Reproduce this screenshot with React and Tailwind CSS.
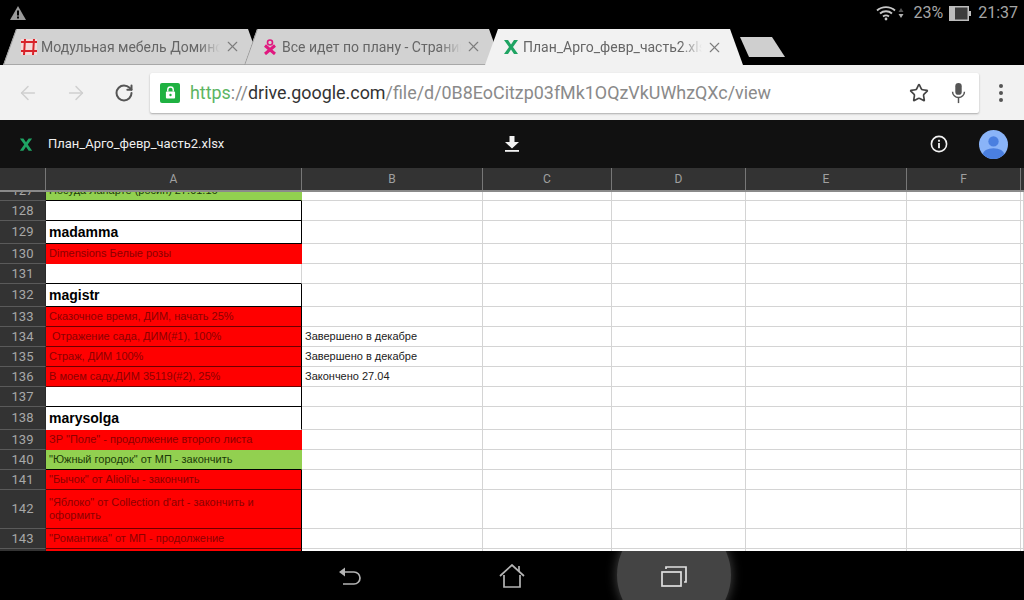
import { ArrowLeft, ArrowRight, RotateCw, Star, X } from "lucide-react";

const GRID = "border-b border-r border-[#d4d4d4]";

const redEdge = "bg-[#ff0000] text-[#8c0000] border-b-[#6e0000] border-r-black";
const whiteEdge = "bg-white text-black border-b-black border-r-black";

const rows = [
  { n: 127, h: "h-[20px]", a: "bg-[#92d050] text-[#1b3a08] border-b-black border-r-[#92d050]", text: "Посуда Лапарте (росип) 27.01.16" },
  { n: 128, h: "h-[20px]", a: whiteEdge },
  { n: 129, h: "h-[23px]", a: whiteEdge, text: "madamma", bold: true },
  { n: 130, h: "h-[20px]", a: "bg-[#ff0000] text-[#8c0000] border-b-[#ff0000] border-r-[#ff0000]", text: "Dimensions Белые розы" },
  { n: 131, h: "h-[20px]", a: "bg-white border-b-black border-r-[#d4d4d4]" },
  { n: 132, h: "h-[23px]", a: whiteEdge, text: "magistr", bold: true },
  { n: 133, h: "h-[20px]", a: redEdge, text: "Сказочное время, ДИМ, начать 25%" },
  { n: 134, h: "h-[20px]", a: redEdge, text: "\u00a0Отражение сада, ДИМ(#1), 100%", b: "Завершено в декабре" },
  { n: 135, h: "h-[20px]", a: redEdge, text: "Страж, ДИМ 100%", b: "Завершено в декабре" },
  { n: 136, h: "h-[20px]", a: redEdge, text: "В моем саду,ДИМ 35119(#2), 25%", b: "Закончено 27.04" },
  { n: 137, h: "h-[20px]", a: whiteEdge },
  { n: 138, h: "h-[23px]", a: "bg-white text-black border-b-white border-r-black", text: "marysolga", bold: true },
  { n: 139, h: "h-[20px]", a: "bg-[#ff0000] text-[#8c0000] border-b-[#ff0000] border-r-[#ff0000]", text: "ЗР \"Поле\" - продолжение второго листа" },
  { n: 140, h: "h-[20px]", a: "bg-[#92d050] text-[#1b3a08] border-b-black border-r-[#92d050]", text: "\"Южный городок\" от МП - закончить" },
  { n: 141, h: "h-[20px]", a: redEdge, text: "\"Бычок\" от Alioli'ы - закончить" },
  { n: 142, h: "h-[39px]", a: redEdge, text: "\"Яблоко\" от Collection d'art - закончить и оформить" },
  { n: 143, h: "h-[20px]", a: redEdge, text: "\"Романтика\" от МП - продолжение" },
  { n: 144, h: "h-[20px]", a: redEdge },
];

function SheetsLogo({ className }) {
  return (
    <svg viewBox="0 0 16 16" className={className}>
      <path d="M1 1h4l3 4.5L11 1h4l-5 7 5 7h-4l-3-4.5L5 15H1l5-7z" fill="#1fa463" />
    </svg>
  );
}

function ModularIcon() {
  return (
    <svg viewBox="0 0 16 16" className="h-[16px] w-[16px] shrink-0">
      <rect width="16" height="16" fill="#f4d8d8" />
      <path d="M4 0 3 16M13 0l-1 16M0 3h16M0 12h16" stroke="#d8232a" strokeWidth="2" fill="none" />
    </svg>
  );
}

function FigureIcon() {
  return (
    <svg viewBox="0 0 16 16" className="h-[16px] w-[16px] shrink-0">
      <circle cx="8" cy="3.5" r="2.5" fill="none" stroke="#e0187f" strokeWidth="1.6" />
      <path d="M3 6.5 13 15M13 6.5 3 15" stroke="#e0187f" strokeWidth="3" />
    </svg>
  );
}

function Tab({ title, icon, active, first }) {
  const shape = active ? "bg-[#f2f2f2] z-20" : "bg-[#d2d2d2] border-b border-[#a8a8a8] z-10";
  return (
    <div
      className={`relative flex h-[36px] w-[258px] shrink-0 items-center pl-[18px] [clip-path:polygon(0_100%,13px_0,calc(100%-13px)_0,100%_100%)] ${shape} ${first ? "ml-[3px]" : "-ml-[17px]"}`}
    >
      {!active && (
        <svg viewBox="0 0 14 36" className="absolute left-0 top-0 h-[36px] w-[14px]">
          <line x1="0.5" y1="36" x2="13.5" y2="0" stroke="#9a9a9a" strokeWidth="1" />
        </svg>
      )}
      {icon}
      <span className="ml-[4px] mt-[1px] w-[179px] overflow-hidden whitespace-nowrap text-[14px] text-[#666] [mask-image:linear-gradient(to_right,black_88%,transparent)]">
        {title}
      </span>
      <X size={17} strokeWidth={1.6} className="ml-[4px] shrink-0 text-[#7d7d7d]" />
    </div>
  );
}

function StatusBar() {
  return (
    <div className="flex h-[29px] items-center justify-between bg-black pb-[3px] pl-[10px] pr-[6px] text-[16px] text-[#a6a6a6]">
      <svg viewBox="0 0 16 14" className="h-[14px] w-[16px]">
        <path d="M8 0 16 14H0z" fill="#9a9a9a" />
        <rect x="7" y="4.5" width="2" height="5" fill="#000" />
        <rect x="7" y="10.5" width="2" height="2" fill="#000" />
      </svg>
      <div className="flex items-center">
        <svg viewBox="0 0 20 16" className="h-[16px] w-[20px]" fill="none" stroke="#c8c8c8" strokeWidth="1.9">
          <path d="M1 5.5C6 1 14 1 19 5.5" />
          <path d="M4 8.5c3.5-3 8.5-3 12 0" />
          <path d="M7 11.5c2-1.5 4-1.5 6 0" />
          <circle cx="10" cy="14" r="1.4" fill="#c8c8c8" stroke="none" />
        </svg>
        <svg viewBox="0 0 6 12" className="ml-[2px] h-[12px] w-[6px]">
          <path d="M3 1 5.5 5h-5z" fill="#555" />
          <path d="M3 11 .5 7h5z" fill="#b0b0b0" />
        </svg>
        <span className="ml-[9px]">23%</span>
        <svg viewBox="0 0 22 15" className="ml-[6px] h-[15px] w-[22px]">
          <rect width="20" height="15" fill="#bdbdbd" />
          <rect x="6" y="1.5" width="12.5" height="12" fill="#3c3c3c" />
          <rect x="20" y="5" width="2" height="5" fill="#bdbdbd" />
        </svg>
        <span className="ml-[7px]">21:37</span>
      </div>
    </div>
  );
}

function TabStrip() {
  return (
    <div className="flex h-[36px] bg-black">
      <Tab first title="Модульная мебель Домино" icon={<ModularIcon />} />
      <Tab title="Все идет по плану - Страница" icon={<FigureIcon />} />
      <Tab active title="План_Арго_февр_часть2.xlsx" icon={<SheetsLogo className="h-[16px] w-[16px] shrink-0" />} />
      <div className="z-0 -ml-[3px] mt-[8px] h-[20px] w-[45px] bg-[#cfcfcf] [clip-path:polygon(0_0,32px_0,100%_100%,9px_100%)]" />
    </div>
  );
}

function Toolbar() {
  return (
    <div className="flex h-[55px] items-center bg-[#f2f2f2] pl-[17px]">
      <ArrowLeft size={22} strokeWidth={1.6} className="text-[#cfcfcf]" />
      <ArrowRight size={22} strokeWidth={1.6} className="ml-[26px] text-[#cfcfcf]" />
      <RotateCw size={20} strokeWidth={2.4} className="ml-[27px] text-[#555]" />
      <div className="ml-[16px] flex h-[40px] w-[829px] items-center rounded-[2px] bg-white pl-[10px] shadow-[0_1px_2px_rgba(0,0,0,0.3)]">
        <div className="flex h-[20px] w-[20px] items-center justify-center rounded-[2px] bg-[#1fb141]">
          <svg viewBox="0 0 12 14" className="h-[13px] w-[11px]">
            <path d="M3 6V4a3 3 0 0 1 6 0v2" fill="none" stroke="#fff" strokeWidth="1.5" />
            <rect x="1" y="6" width="10" height="7.5" rx="1" fill="#fff" />
            <circle cx="6" cy="9.7" r="1.3" fill="#1fb141" />
          </svg>
        </div>
        <div className="ml-[10px] mt-[2px] whitespace-nowrap text-[17.9px] text-[#8a8a8a]">
          <span className="text-[#5cb562]">https</span>
          ://
          <span className="text-[#333]">drive.google.com</span>
          /file/d/0B8EoCitzp03fMk1OQzVkUWhzQXc/view
        </div>
        <Star size={20} strokeWidth={2} className="ml-[138px] shrink-0 text-[#444]" />
        <svg viewBox="0 0 16 24" className="ml-[22px] h-[22px] w-[15px] shrink-0">
          <rect x="4.5" y="1" width="7" height="13" rx="3.5" fill="#555" />
          <path d="M1.5 10.5a6.5 6.5 0 0 0 13 0" fill="none" stroke="#555" strokeWidth="1.6" />
          <rect x="7.2" y="17" width="1.6" height="6" fill="#555" />
        </svg>
      </div>
      <div className="ml-[20px] flex flex-col gap-[3px]">
        <span className="h-[4px] w-[4px] rounded-full bg-[#555]" />
        <span className="h-[4px] w-[4px] rounded-full bg-[#555]" />
        <span className="h-[4px] w-[4px] rounded-full bg-[#555]" />
      </div>
    </div>
  );
}

function DocHeader() {
  return (
    <div className="flex h-[48px] items-center bg-[#111] pl-[19px] text-white">
      <SheetsLogo className="h-[15px] w-[14px] shrink-0" />
      <span className="ml-[15px] w-[456px] text-[13px] text-[#eee]">План_Арго_февр_часть2.xlsx</span>
      <svg viewBox="0 0 16 16" className="h-[16px] w-[16px] shrink-0">
        <path d="M5.5 0h5v6H15l-7 6.5L1 6h4.5z" fill="#f2f2f2" />
        <rect x="1" y="14" width="14" height="1.8" fill="#f2f2f2" />
      </svg>
      <svg viewBox="0 0 18 18" className="ml-[410px] h-[18px] w-[18px] shrink-0">
        <circle cx="9" cy="9" r="7.6" fill="none" stroke="#f2f2f2" strokeWidth="1.6" />
        <rect x="8.1" y="8" width="1.8" height="5.2" fill="#f2f2f2" />
        <rect x="8.1" y="4.8" width="1.8" height="1.9" fill="#f2f2f2" />
      </svg>
      <svg viewBox="0 0 28 28" className="ml-[31px] h-[29px] w-[29px] shrink-0">
        <defs>
          <clipPath id="avatar-clip">
            <circle cx="14" cy="14" r="14" />
          </clipPath>
        </defs>
        <g clipPath="url(#avatar-clip)">
          <rect width="28" height="28" fill="#8ab4f8" />
          <circle cx="14" cy="11" r="5" fill="#4a7fe0" />
          <ellipse cx="14" cy="24" rx="10.5" ry="6.5" fill="#4a7fe0" />
        </g>
      </svg>
    </div>
  );
}

function ColumnHeader() {
  const columns = [
    { label: "A", w: "w-[256px]" },
    { label: "B", w: "w-[181px]" },
    { label: "C", w: "w-[129px]" },
    { label: "D", w: "w-[134px]" },
    { label: "E", w: "w-[161px]" },
    { label: "F", w: "w-[114px]" },
  ];
  return (
    <div className="flex h-[24px] border-b-2 border-[#8a8a8a] bg-[#333] text-[12px] text-[#a0a0a0]">
      <div className="w-[46px] shrink-0 border-r border-[#777]" />
      {columns.map((col) => (
        <div key={col.label} className={`${col.w} flex shrink-0 items-center justify-center border-r border-[#777]`}>
          {col.label}
        </div>
      ))}
      <div className="flex-1" />
    </div>
  );
}

function SheetRow({ row }) {
  const textClass = row.bold
    ? "font-['Liberation_Sans',sans-serif] text-[14px] font-bold"
    : "font-['Liberation_Sans',sans-serif] text-[11px] leading-[13px]";
  return (
    <div className={`flex ${row.h}`}>
      <div className="flex w-[46px] shrink-0 items-center justify-center border-b border-r border-b-[#5a5a5a] border-r-[#2a2a2a] bg-[#333] text-[13px] text-[#a8a8a8]">
        {row.n}
      </div>
      <div className={`flex w-[256px] shrink-0 items-center border-b border-r pl-[3px] pr-[40px] ${row.a} ${textClass}`}>
        {row.text}
      </div>
      <div className={`flex w-[181px] shrink-0 items-center pl-[3px] font-['Liberation_Sans',sans-serif] text-[11px] text-[#222] ${GRID}`}>
        {row.b}
      </div>
      <div className={`w-[129px] shrink-0 ${GRID}`} />
      <div className={`w-[134px] shrink-0 ${GRID}`} />
      <div className={`w-[161px] shrink-0 ${GRID}`} />
      <div className={`w-[114px] shrink-0 ${GRID}`} />
      <div className={`flex-1 ${GRID}`} />
    </div>
  );
}

function NavBar() {
  return (
    <div className="flex h-[49px] justify-center overflow-hidden bg-black">
      <div className="flex w-[162px] items-center justify-center">
        <svg viewBox="0 0 24 20" className="h-[20px] w-[24px]" fill="none" stroke="#b4b4b4" strokeWidth="1.7">
          <path d="M5 6h11a6 6 0 0 1 0 12H5" />
          <path d="M7 1.5v9L1 6z" fill="#b4b4b4" stroke="none" />
        </svg>
      </div>
      <div className="flex w-[162px] items-center justify-center">
        <svg viewBox="0 0 26 24" className="h-[24px] w-[26px]" fill="none" stroke="#b4b4b4" strokeWidth="1.7">
          <path d="M1 12 13 1l12 11" />
          <path d="M5 11v12h16V11" />
          <path d="M20 2v5" />
        </svg>
      </div>
      <div className="relative flex w-[162px] items-center justify-center">
        <div className="absolute left-[24px] top-[-33px] h-[114px] w-[114px] rounded-full bg-[#444] shadow-[0_0_12px_rgba(120,120,120,0.6)]" />
        <svg viewBox="0 0 26 22" className="relative h-[22px] w-[26px]" fill="none" stroke="#e0e0e0" strokeWidth="1.7">
          <rect x="1" y="7" width="19" height="14" />
          <path d="M5 4V2h20v15h-2" />
        </svg>
      </div>
    </div>
  );
}

export default function App() {
  return (
    <div className="flex h-[600px] w-[1024px] flex-col overflow-hidden bg-black font-['Roboto',sans-serif]">
      <StatusBar />
      <TabStrip />
      <Toolbar />
      <DocHeader />
      <ColumnHeader />
      <div className="h-[359px] overflow-hidden bg-white">
        <div className="-mt-[11px]">
          {rows.map((row) => (
            <SheetRow key={row.n} row={row} />
          ))}
        </div>
      </div>
      <NavBar />
    </div>
  );
}
